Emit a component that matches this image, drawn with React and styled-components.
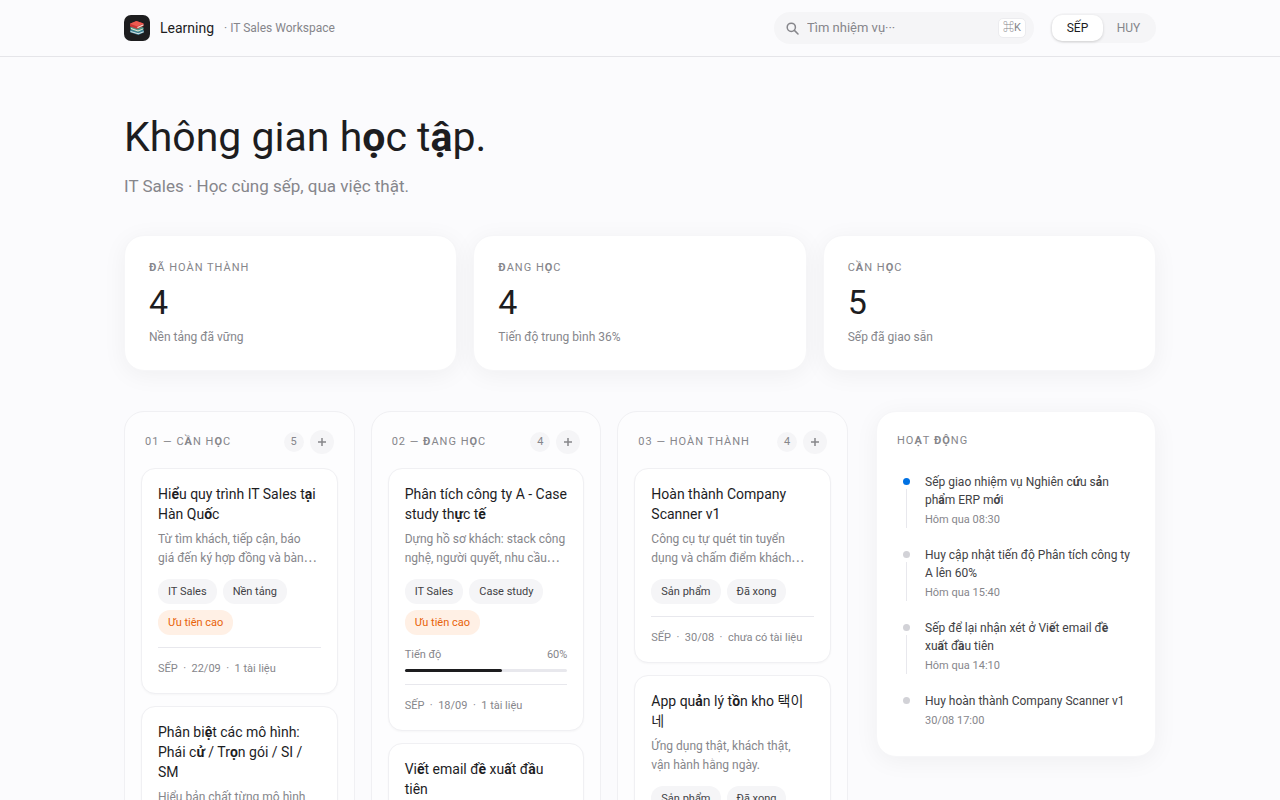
import React from "react";
import styled, { createGlobalStyle } from "styled-components";

const GlobalStyle = createGlobalStyle`
  *, *::before, *::after { box-sizing: border-box; }
  body {
    margin: 0;
    background: #fbfbfd;
    color: #1d1d1f;
    font-family: Roboto, "Noto Sans CJK KR", sans-serif;
    font-size: 14px;
    line-height: 20px;
  }
  h1, h2, h3, p, ul, ol { margin: 0; padding: 0; font-weight: 400; }
  ul, ol { list-style: none; }
  button, input { font: inherit; color: inherit; }
  button { border: 0; padding: 0; cursor: pointer; }
`;

const TopBar = styled.header`
  border-bottom: 1px solid #e5e5e9;
`;

const Container = styled.div`
  max-width: 1080px;
  margin: 0 auto;
  padding: 0 24px;
`;

const TopBarInner = styled(Container)`
  display: flex;
  align-items: center;
  justify-content: space-between;
  height: 56px;
`;

const Brand = styled.a`
  display: flex;
  align-items: center;
  gap: 10px;
  color: inherit;
  font-size: 14px;
  text-decoration: none;
`;

const Logo = styled.span`
  display: grid;
  place-items: center;
  width: 26px;
  height: 26px;
  border-radius: 7px;
  background: #1d1d1f;
`;

const BrandNote = styled.span`
  color: #86868b;
  font-size: 12px;
`;

const TopTools = styled.div`
  display: flex;
  align-items: center;
  gap: 16px;
`;

const SearchBox = styled.label`
  display: flex;
  align-items: center;
  gap: 8px;
  width: 260px;
  height: 32px;
  padding: 0 8px 0 12px;
  border-radius: 16px;
  background: #f5f5f7;
  color: #86868b;
`;

const SearchInput = styled.input`
  flex: 1;
  min-width: 0;
  border: 0;
  padding: 0;
  outline: 0;
  background: transparent;
  font-size: 13px;
  &::placeholder { color: #86868b; opacity: 1; }
`;

const Shortcut = styled.kbd`
  display: inline-flex;
  align-items: center;
  justify-content: center;
  width: 28px;
  height: 20px;
  border: 1px solid #ececef;
  border-radius: 5px;
  background: #fff;
  font-family: inherit;
  font-size: 11px;
`;

const Switcher = styled.div`
  display: flex;
  padding: 2px;
  border-radius: 15px;
  background: #f5f5f7;
`;

const SwitchButton = styled.button`
  min-width: 51px;
  height: 26px;
  padding: 0 12px;
  border-radius: 10px;
  background: ${({ $active }) => ($active ? "#fff" : "transparent")};
  box-shadow: ${({ $active }) => ($active ? "0 1px 3px rgba(0, 0, 0, 0.16)" : "none")};
  color: ${({ $active }) => ($active ? "#1d1d1f" : "#86868b")};
  font-size: 12px;
`;

const Intro = styled.section`
  padding: 52px 0 36px;
`;

const PageTitle = styled.h1`
  font-size: 41px;
  line-height: 56px;
`;

const PageNote = styled.p`
  margin-top: 8px;
  color: #86868b;
  font-size: 17px;
  line-height: 26px;
`;

const Stats = styled.section`
  display: grid;
  grid-template-columns: repeat(3, 1fr);
  gap: 16px;
`;

const Panel = styled.div`
  border: 1px solid #f6f6f8;
  border-radius: 20px;
  background: #fff;
  box-shadow: 0 4px 24px rgba(0, 0, 0, 0.05);
`;

const StatCard = styled(Panel)`
  padding: 23px 24px;
`;

const Label = styled.h2`
  color: #86868b;
  font-size: 11px;
  line-height: 18px;
  letter-spacing: 1px;
`;

const StatValue = styled.p`
  margin-top: 5px;
  font-size: 34px;
  line-height: 40px;
`;

const StatNote = styled.p`
  margin-top: 5px;
  color: #86868b;
  font-size: 12px;
`;

const Workspace = styled.main`
  display: grid;
  grid-template-columns: 1fr 280px;
  align-items: start;
  gap: 28px;
  padding: 40px 0 60px;
`;

const Board = styled.div`
  display: grid;
  grid-template-columns: repeat(3, minmax(0, 1fr));
  gap: 16px;
`;

const Column = styled.section`
  padding: 18px 16px 16px;
  border: 1px solid #f0f0f3;
  border-radius: 20px;
  background: #fdfdfe;
`;

const ColumnHead = styled.div`
  display: flex;
  align-items: center;
  justify-content: space-between;
  height: 24px;
  margin-bottom: 14px;
  padding: 0 4px;
`;

const ColumnTools = styled.div`
  display: flex;
  align-items: center;
  gap: 6px;
`;

const Count = styled.span`
  width: 20px;
  border-radius: 10px;
  background: #f5f5f7;
  color: #86868b;
  font-size: 11px;
  text-align: center;
`;

const AddButton = styled.button`
  display: grid;
  place-items: center;
  width: 24px;
  height: 24px;
  border-radius: 50%;
  background: #f5f5f7;
  color: #86868b;
`;

const CardList = styled.ul`
  display: grid;
  gap: 12px;
`;

const Card = styled.li`
  padding: 15px 16px;
  border: 1px solid #f0f0f3;
  border-radius: 14px;
  background: #fff;
  box-shadow: 0 1px 2px rgba(0, 0, 0, 0.03);
`;

const CardTitle = styled.h3`
  font-size: 14px;
  line-height: 20px;
`;

const CardText = styled.p`
  margin-top: 6px;
  color: #86868b;
  font-size: 12px;
  line-height: 19px;
  white-space: pre-line;
`;

const Dots = styled.span`
  font-family: "Noto Sans CJK JP", sans-serif;
  line-height: 1;
`;

const Tags = styled.div`
  display: flex;
  flex-wrap: wrap;
  gap: 6px;
  margin-top: 11px;
`;

const Tag = styled.span`
  padding: 0 10px;
  border-radius: 12px;
  background: ${({ $urgent }) => ($urgent ? "#fff0e5" : "#f5f5f7")};
  color: ${({ $urgent }) => ($urgent ? "#e8630a" : "#424245")};
  font-size: 11px;
  line-height: 25px;
`;

const ProgressHead = styled.div`
  display: flex;
  justify-content: space-between;
  margin-top: 12px;
  color: #86868b;
  font-size: 11px;
  line-height: 16px;
`;

const Track = styled.div`
  height: 3px;
  margin-top: 6px;
  border-radius: 2px;
  background: #e8e8ed;
`;

const Fill = styled.div`
  height: 100%;
  border-radius: 2px;
  background: #1d1d1f;
`;

const CardFoot = styled.p`
  margin-top: 12px;
  padding-top: 12px;
  border-top: 1px solid #e8e8ed;
  color: #86868b;
  font-size: 11px;
  line-height: 18px;
  white-space: pre;
`;

const Activity = styled(Panel).attrs({ as: "aside" })`
  padding: 20px 20px 27px;
`;

const ActivityList = styled.ol`
  display: grid;
  gap: 18px;
  margin-top: 23px;
`;

const ActivityItem = styled.li`
  display: flex;
  gap: 15px;
  padding-left: 6px;
`;

const Rail = styled.div`
  display: flex;
  flex-direction: column;
  align-items: center;
  gap: 4px;
  width: 7px;
  padding-top: 5px;
  &::before {
    content: "";
    width: 7px;
    height: 7px;
    border-radius: 50%;
    background: ${({ $current }) => ($current ? "#0071e3" : "#d2d2d7")};
  }
  &::after {
    content: "";
    display: ${({ $last }) => ($last ? "none" : "block")};
    flex: 1;
    width: 1px;
    background: #e8e8ed;
  }
`;

const ActivityText = styled.p`
  color: #424245;
  font-size: 12px;
  line-height: 18px;
  white-space: pre-line;
`;

const ActivityTime = styled.p`
  margin-top: 2px;
  color: #86868b;
  font-size: 11px;
  line-height: 17px;
`;

const Heavy = styled.b`
  font-weight: 700;
`;

/* Sets the accented Vietnamese letters of a heading in the bold face. */
function Accented({ children }) {
  return children
    .split(/([Đ\u1ea0-\u1ef9]+)/)
    .map((part, i) => (i % 2 ? <Heavy key={i}>{part}</Heavy> : part));
}

const Books = () => (
  <svg width="16" height="16" viewBox="0 0 16 16" aria-hidden="true">
    <path d="M1 10.2 6.3 8l8.6 2.2v2.4L9.3 15 1 12.3z" fill="#3d7f95" />
    <path d="m1.6 11 7.7 2.3 5.3-2v1L9.3 14.3l-7.7-2.4z" fill="#dfe9e8" />
    <path d="m1.3 7 5-2 8.2 2.4v2.2L9 12 1.3 9.4z" fill="#4d9a8b" />
    <path d="M2 8.1 9 10.4l5.2-2v.9L9 11.4 2 9.1z" fill="#efe9d9" />
    <path d="M1 3.8 7.4 1l7.2 2.5v2.6L8.3 9 1 6.4z" fill="#c93636" />
    <path d="M1 3.8 7.4 1l7.2 2.5-6.2 3z" fill="#ee5a50" />
    <path d="m8.4 7 6-2.7v1.3l-6 2.7z" fill="#f1e6d8" />
  </svg>
);

const SearchIcon = () => (
  <svg width="13" height="13" viewBox="0 0 13 13" fill="none" stroke="currentColor" strokeWidth="1.5" strokeLinecap="round" aria-hidden="true">
    <circle cx="5.3" cy="5.3" r="4.1" />
    <path d="m8.4 8.4 3.6 3.6" />
  </svg>
);

const PlusIcon = () => (
  <svg width="8" height="8" viewBox="0 0 8 8" stroke="currentColor" strokeWidth="1.5" aria-hidden="true">
    <path d="M4 0v8M0 4h8" />
  </svg>
);

const stats = [
  { label: "ĐÃ HOÀN THÀNH", value: 4, note: "Nền tảng đã vững" },
  { label: "ĐANG HỌC", value: 4, note: "Tiến độ trung bình 36%" },
  { label: "CẦN HỌC", value: 5, note: "Sếp đã giao sẵn" },
];

const columns = [
  {
    title: "01 — CẦN HỌC",
    count: 5,
    cards: [
      {
        title: "Hiểu quy trình IT Sales tại Hàn Quốc",
        text: "Từ tìm khách, tiếp cận, báo\ngiá đến ký hợp đồng và bàn",
        more: true,
        tags: ["IT Sales", "Nền tảng"],
        urgent: true,
        foot: "SẾP  ·  22/09  ·  1 tài liệu",
      },
      {
        title: "Phân biệt các mô hình: Phái cử / Trọn gói / SI / SM",
        text: "Hiểu bản chất từng mô hình",
        tags: ["IT Sales"],
        foot: "SẾP",
      },
    ],
  },
  {
    title: "02 — ĐANG HỌC",
    count: 4,
    cards: [
      {
        title: "Phân tích công ty A - Case study thực tế",
        text: "Dựng hồ sơ khách: stack công\nnghệ, người quyết, nhu cầu",
        more: true,
        tags: ["IT Sales", "Case study"],
        urgent: true,
        progress: 60,
        foot: "SẾP  ·  18/09  ·  1 tài liệu",
      },
      { title: "Viết email đề xuất đầu tiên", tags: ["IT Sales"], foot: "SẾP" },
    ],
  },
  {
    title: "03 — HOÀN THÀNH",
    count: 4,
    cards: [
      {
        title: "Hoàn thành Company Scanner v1",
        text: "Công cụ tự quét tin tuyển\ndụng và chấm điểm khách",
        more: true,
        tags: ["Sản phẩm", "Đã xong"],
        foot: "SẾP  ·  30/08  ·  chưa có tài liệu",
      },
      {
        title: "App quản lý tồn kho 택이네",
        text: "Ứng dụng thật, khách thật,\nvận hành hằng ngày.",
        tags: ["Sản phẩm", "Đã xong"],
        foot: "SẾP",
      },
    ],
  },
];

const activity = [
  { lead: "Sếp giao nhiệm vụ ", task: "Nghiên cứu sản phẩm ERP mới", time: "Hôm qua 08:30" },
  { lead: "Huy cập nhật tiến độ Phân tích công ty A lên 60%", task: "", time: "Hôm qua 15:40" },
  { lead: "Sếp để lại nhận xét ở ", task: "Viết email đề\nxuất đầu tiên", time: "Hôm qua 14:10" },
  { lead: "Huy hoàn thành ", task: "Company Scanner v1", time: "30/08 17:00" },
];

function TaskCard({ card }) {
  return (
    <Card>
      <CardTitle><Accented>{card.title}</Accented></CardTitle>
      {card.text && <CardText>{card.text}{card.more && <Dots>…</Dots>}</CardText>}
      <Tags>
        {card.tags.map((tag) => <Tag key={tag}>{tag}</Tag>)}
        {card.urgent && <Tag $urgent>Ưu tiên cao</Tag>}
      </Tags>
      {card.progress && (
        <>
          <ProgressHead><span>Tiến độ</span><span>{card.progress}%</span></ProgressHead>
          <Track><Fill style={{ width: `${card.progress}%` }} /></Track>
        </>
      )}
      <CardFoot>{card.foot}</CardFoot>
    </Card>
  );
}

export default function App() {
  const [user, setUser] = React.useState("SẾP");
  return (
    <>
      <GlobalStyle />
      <TopBar>
        <TopBarInner>
          <Brand href="#">
            <Logo><Books /></Logo>
            Learning
            <BrandNote>· IT Sales Workspace</BrandNote>
          </Brand>
          <TopTools>
            <SearchBox>
              <SearchIcon />
              <SearchInput type="text" aria-label="Tìm nhiệm vụ" placeholder="Tìm nhiệm vụ···" />
              <Shortcut>⌘K</Shortcut>
            </SearchBox>
            <Switcher>
              {["SẾP", "HUY"].map((name) => (
                <SwitchButton key={name} type="button" $active={user === name} onClick={() => setUser(name)}>
                  {name}
                </SwitchButton>
              ))}
            </Switcher>
          </TopTools>
        </TopBarInner>
      </TopBar>
      <Container>
        <Intro>
          <PageTitle><Accented>Không gian học tập.</Accented></PageTitle>
          <PageNote>IT Sales · Học cùng sếp, qua việc thật.</PageNote>
        </Intro>
        <Stats>
          {stats.map((stat) => (
            <StatCard key={stat.label}>
              <Label><Accented>{stat.label}</Accented></Label>
              <StatValue>{stat.value}</StatValue>
              <StatNote>{stat.note}</StatNote>
            </StatCard>
          ))}
        </Stats>
        <Workspace>
          <Board>
            {columns.map((column) => (
              <Column key={column.title}>
                <ColumnHead>
                  <Label><Accented>{column.title}</Accented></Label>
                  <ColumnTools>
                    <Count>{column.count}</Count>
                    <AddButton type="button" aria-label="Thêm nhiệm vụ"><PlusIcon /></AddButton>
                  </ColumnTools>
                </ColumnHead>
                <CardList>
                  {column.cards.map((card) => <TaskCard key={card.title} card={card} />)}
                </CardList>
              </Column>
            ))}
          </Board>
          <Activity>
            <Label><Accented>HOẠT ĐỘNG</Accented></Label>
            <ActivityList>
              {activity.map((item, i) => (
                <ActivityItem key={item.time}>
                  <Rail $current={i === 0} $last={i === activity.length - 1} />
                  <div>
                    <ActivityText>{item.lead}<Accented>{item.task}</Accented></ActivityText>
                    <ActivityTime>{item.time}</ActivityTime>
                  </div>
                </ActivityItem>
              ))}
            </ActivityList>
          </Activity>
        </Workspace>
      </Container>
    </>
  );
}
